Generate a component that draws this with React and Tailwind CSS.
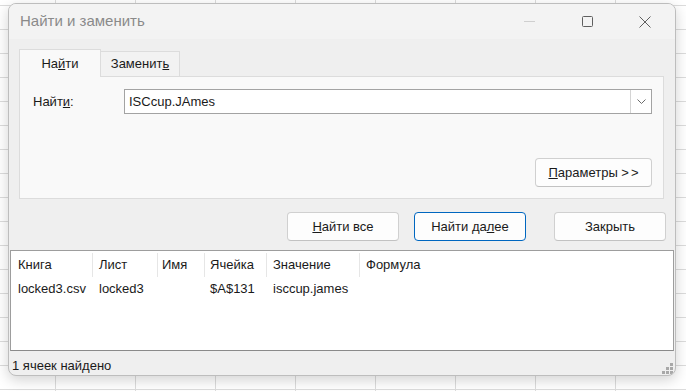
import React from 'react'

const cols = [
  { label: 'Книга', pad: 'pl-[7px]' },
  { label: 'Лист', pad: 'pl-[6px]' },
  { label: 'Имя', pad: 'pl-[4px]' },
  { label: 'Ячейка', pad: 'pl-[5px]' },
  { label: 'Значение', pad: 'pl-[6px]' },
  { label: 'Формула', pad: 'pl-[6px]' },
]

const row = ['locked3.csv', 'locked3', '', '$A$131', 'isccup.james', '']

function Btn({ children, primary, className = '' }) {
  return (
    <div
      className={`h-[29px] w-[112px] rounded-[4px] flex items-center justify-center bg-[#fdfdfd] border ${
        primary ? 'border-[#0067c0]' : 'border-[#d0d0d0] border-b-[#c2c2c2]'
      } ${className}`}
    >
      {children}
    </div>
  )
}

export default function App() {
  return (
    <div className="w-[686px] h-[391px] overflow-hidden bg-white bg-[linear-gradient(to_right,#dcdcdc_1px,transparent_1px),linear-gradient(to_bottom,#dcdcdc_1px,transparent_1px)] bg-size-[80px_24px] bg-position-[55px_5px] pt-[3px] pl-[8px] font-['Liberation_Sans',Arial,sans-serif] text-[13px] text-[#1a1a1a]">
      <div className="w-[668px] h-[373px] rounded-lg border border-[#bdbdbd] bg-[#efefef] shadow-[0_4px_14px_rgba(0,0,0,0.18)] overflow-hidden flex flex-col">
        {/* title bar */}
        <div className="h-[35px] shrink-0 bg-[#f3f3f3] flex items-center">
          <span className="pl-[11px] text-[15px] text-[#8a8a8a]">Найти и заменить</span>
          <div className="ml-auto flex pr-[1px]">
            <div className="w-[58px] flex justify-center">
              <svg width="11" height="11" viewBox="0 0 11 11">
                <line x1="0" y1="5.5" x2="11" y2="5.5" stroke="#cfcfcf" strokeWidth="1" />
              </svg>
            </div>
            <div className="w-[58px] flex justify-center">
              <svg width="11" height="11" viewBox="0 0 11 11">
                <rect x="0.5" y="0.5" width="10" height="10" rx="1" fill="none" stroke="#5f5f5f" strokeWidth="1" />
              </svg>
            </div>
            <div className="w-[58px] flex justify-center">
              <svg width="12" height="12" viewBox="0 0 12 12">
                <path d="M0.5 0.5 L11.5 11.5 M11.5 0.5 L0.5 11.5" stroke="#5f5f5f" strokeWidth="1" />
              </svg>
            </div>
          </div>
        </div>

        {/* body */}
        <div className="shrink-0 pl-[10px] pr-[11px] pt-[10px]">
          {/* tabs */}
          <div className="flex items-end h-[27px]">
            <div className="relative z-10 -mb-px h-[28px] w-[82px] bg-[#f9f9f9] border border-b-0 border-[#dcdcdc] flex items-center justify-center">
              <span>На<span className="underline">й</span>ти</span>
            </div>
            <div className="h-[25px] w-[79px] bg-[#f2f2f2] border border-l-0 border-b-0 border-[#dcdcdc] flex items-center justify-center">
              <span>Заменит<span className="underline">ь</span></span>
            </div>
          </div>
          {/* panel */}
          <div className="h-[123px] bg-[#f9f9f9] border border-[#dcdcdc] flex flex-col justify-between pt-[12px] pb-[11px] pl-[13px] pr-[11px]">
            <div className="flex items-center">
              <span className="w-[91px]">Найт<span className="underline">и</span>:</span>
              <div className="flex-1 h-[25px] bg-white border border-[#a3a3a3] flex items-center">
                <span className="pl-[4px] flex-1">ISCcup.JAmes</span>
                <div className="h-full w-[21px] border-l border-[#d4d4d4] flex items-center justify-center">
                  <svg width="9" height="5" viewBox="0 0 9 5">
                    <path d="M0.5 0.5 L4.5 4.5 L8.5 0.5" fill="none" stroke="#6b6b6b" strokeWidth="1" />
                  </svg>
                </div>
              </div>
            </div>
            <div className="flex justify-end">
              <Btn className="w-[117px]">
                <span><span className="underline">П</span>араметры &gt;<span className="pl-[2px]">&gt;</span></span>
              </Btn>
            </div>
          </div>
          {/* buttons */}
          <div className="flex justify-end mt-[13px] -mr-[2px]">
            <Btn>
              <span><span className="underline">Н</span>айти все</span>
            </Btn>
            <Btn primary className="ml-[15px]">
              <span>Найти да<span className="underline">л</span>ее</span>
            </Btn>
            <Btn className="ml-[28px]">Закрыть</Btn>
          </div>
        </div>

        {/* results list */}
        <div className="mt-[9px] mx-[1px] h-[101px] shrink-0 bg-white border border-[#9d9d9d] border-b-[#8a8a8a] pt-[2px]">
          <div className="grid grid-cols-[82px_65px_47px_62px_93px_1fr]">
            {cols.map((c, i) => (
              <div key={c.label} className="h-[24px] flex items-center">
                <div className={`h-full flex-1 flex items-center ${c.pad} ${i < 5 ? 'border-r border-[#e6e6e6]' : ''}`}>
                  {c.label}
                </div>
              </div>
            ))}
            {row.map((v, i) => (
              <div key={i} className={`h-[24px] flex items-center ${cols[i].pad}`}>
                {v}
              </div>
            ))}
          </div>
        </div>

        {/* status */}
        <div className="flex-1 flex items-center justify-between pl-[3px] pr-[1px] pt-[4px]">
          <span className="pt-px">1 ячеек найдено</span>
          <svg width="12" height="12" viewBox="0 0 12 12" className="self-end mb-[1px]">
            <g fill="#a8a8a8">
              <rect x="8" y="0" width="3" height="3" />
              <rect x="4" y="4" width="3" height="3" />
              <rect x="8" y="4" width="3" height="3" />
              <rect x="0" y="8" width="3" height="3" />
              <rect x="4" y="8" width="3" height="3" />
              <rect x="8" y="8" width="3" height="3" />
            </g>
          </svg>
        </div>
      </div>
    </div>
  )
}
